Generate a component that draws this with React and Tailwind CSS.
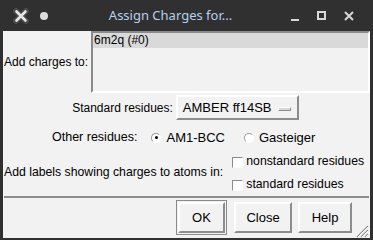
import React from "react";

const font = { fontFamily: '"Liberation Sans", Arial, sans-serif' };

const TitleBar = () => (
  <div className="flex h-[31px] items-center bg-[#303030] px-[12px]">
    <svg width="18" height="18" viewBox="0 0 18 18" className="shrink-0">
      <path d="M4 4 L14 14 M14 4 L4 14" stroke="#4a4a4a" strokeWidth="6" strokeLinecap="round" />
      <path d="M4.5 4.5 L13.5 13.5 M13.5 4.5 L4.5 13.5" stroke="#e6e6e6" strokeWidth="2.6" strokeLinecap="round" />
    </svg>
    <div className="ml-[10px] h-[8px] w-[8px] rounded-full bg-[#dcdcdc]" />
    <div
      className="flex-1 text-center text-[13px] text-[#b4d0ee] pl-[2px]"
      style={{ fontFamily: '"Noto Sans", sans-serif' }}
    >
      Assign Charges for...
    </div>
    <div className="flex items-center gap-[18px] pr-[7px]">
      <div className="mt-[8px] h-[2px] w-[8px] bg-[#d8d8d8]" />
      <div className="h-[9px] w-[9px] border-2 border-[#d8d8d8]" />
      <svg width="10" height="10" viewBox="0 0 10 10">
        <path d="M1 1 L9 9 M9 1 L1 9" stroke="#d8d8d8" strokeWidth="2" />
      </svg>
    </div>
  </div>
);

const Radio = ({ on }) => (
  <span className="relative inline-block h-[10px] w-[10px] rounded-full border border-t-[#9a9a9a] border-l-[#9a9a9a] border-b-white border-r-white bg-white">
    {on && <span className="absolute left-[2.5px] top-[2.5px] h-[3px] w-[3px] rounded-full bg-black" />}
  </span>
);

const Check = () => (
  <span className="inline-block h-[11px] w-[11px] border border-t-[#8a8a8a] border-l-[#8a8a8a] border-b-white border-r-white bg-white" />
);

const Btn = ({ children, className }) => (
  <div
    className={`flex h-[31px] items-center justify-center border-2 border-t-white border-l-white border-b-[#8c8c8c] border-r-[#8c8c8c] bg-[#f2f2f2] text-[13px] text-black ${className}`}
  >
    {children}
  </div>
);

export default function App() {
  return (
    <div className="h-[240px] w-[373px] bg-[#303030] text-[12px] text-black" style={font}>
      <TitleBar />
      <div className="mx-[3px] flex h-[207px] flex-col bg-[#f2f2f2]">
        <div className="flex h-[62px] items-center">
          <div className="pl-[1px] pr-[3px]">Add charges to:</div>
          <div className="h-[62px] flex-1 border-2 border-t-[#8a8a8a] border-l-[#8a8a8a] border-b-white border-r-white">
            <div className="h-[15px] bg-[#d9d9d9] pl-[1px] leading-[14px]">6m2q (#0)</div>
          </div>
        </div>
        <div className="mt-[2px] flex h-[25px] items-center justify-center pr-[2px]">
          <div className="pr-[3px]">Standard residues:</div>
          <div className="flex h-[25px] w-[123px] items-center border-2 border-t-white border-l-white border-b-[#8c8c8c] border-r-[#8c8c8c] pl-[5px]">
            <span className="text-[13px]">AMBER ff14SB</span>
            <span className="ml-auto mr-[6px] mt-[2px] h-[4px] w-[13px] border border-t-white border-l-white border-b-[#8c8c8c] border-r-[#8c8c8c] bg-[#d8d8d8]" />
          </div>
        </div>
        <div className="mt-[6px] flex h-[24px] items-center pl-[49px] text-[12.5px]">
          <span>Other residues:</span>
          <span className="ml-[14px] mt-[1px] flex"><Radio on /></span>
          <span className="ml-[5px] text-[13px]">AM1-BCC</span>
          <span className="ml-[19px] mt-[1px] flex"><Radio /></span>
          <span className="ml-[5px] text-[13px]">Gasteiger</span>
        </div>
        <div className="mt-[5px] flex h-[40px] items-center">
          <div className="pl-[1px] pr-[9px] text-[12.25px]">Add labels showing charges to atoms in:</div>
          <div className="flex flex-col gap-[9px]">
            <div className="flex items-end gap-[3px]"><Check /><span className="leading-[14px] text-[12.25px]">nonstandard residues</span></div>
            <div className="flex items-end gap-[3px]"><Check /><span className="leading-[14px] text-[12.25px]">standard residues</span></div>
          </div>
        </div>
        <div className="mx-[1px] mt-[5px] h-[2px] bg-[#8c8c8c]" />
        <div className="flex flex-1 items-start pt-[2px]">
          <div className="ml-auto flex items-center pr-[18px]">
            <div className="border border-[#8a8a8a] p-[1px]">
              <Btn className="w-[47px]">OK</Btn>
            </div>
            <Btn className="ml-[7px] w-[58px]">Close</Btn>
            <Btn className="ml-[6px] w-[54px]">Help</Btn>
          </div>
          <svg width="16" height="16" viewBox="0 0 16 16" className="mt-[22px] -ml-[17px] mr-[1px]">
            <path d="M15 4 L4 15 M15 8 L8 15 M15 12 L12 15" stroke="#8c8c8c" strokeWidth="1.2" />
            <path d="M15 5 L5 15 M15 9 L9 15 M15 13 L13 15" stroke="#ffffff" strokeWidth="1" />
          </svg>
        </div>
      </div>
    </div>
  );
}
